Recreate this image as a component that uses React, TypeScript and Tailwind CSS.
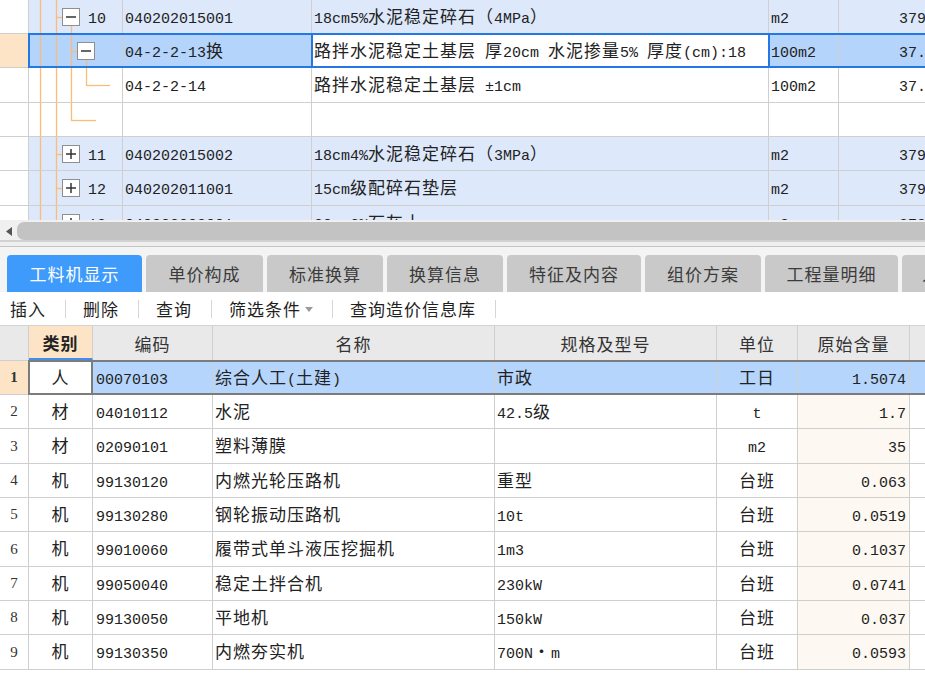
import React from "react"

const cjk = /([\u2E80-\u9FFF\uFF00-\uFFEF]+)/

// mixed text: CJK runs in a CJK face, the rest in a mono face
function Txt({ s, bold }: { s: string; bold?: boolean }) {
  const parts = s.split(cjk).filter((p) => p !== "")
  return (
    <span className={["whitespace-pre", bold ? "font-bold" : ""].join(" ")}>
      {parts.map((p, i) =>
        cjk.test(p) ? (
          <span key={i} className="font-['Noto_Sans_CJK_SC',sans-serif] text-[17px] tracking-[1px] leading-none">
            {p}
          </span>
        ) : (
          <span key={i} className="font-['Liberation_Mono',monospace] text-[15px] leading-none">
            {p}
          </span>
        )
      )}
    </span>
  )
}

type TreeKind = "open" | "sel" | "leaf" | "empty" | "closed"

function TreeLines({ kind, h }: { kind: TreeKind; h: number }) {
  const c = "#f9bd78"
  const box = (x: number, plus: boolean) => (
    <g>
      <rect x={x + 0.5} y={8.5} width={17} height={17} fill="#fff" stroke="#8f8f8f" />
      <line x1={x + 4} y1={17} x2={x + 14} y2={17} stroke="#333" strokeWidth={1.5} />
      {plus && <line x1={x + 9} y1={12} x2={x + 9} y2={22} stroke="#333" strokeWidth={1.5} />}
    </g>
  )
  return (
    <svg width="93" height={h} className="absolute left-0 top-0">
      <line x1={11.5} y1={0} x2={11.5} y2={h} stroke={c} strokeWidth={1.3} />
      <line x1={27.5} y1={0} x2={27.5} y2={h} stroke={c} strokeWidth={1.3} />
      {kind === "open" && (
        <>
          <line x1={27} y1={17.5} x2={33} y2={17.5} stroke={c} strokeWidth={1.3} />
          <line x1={42.5} y1={26} x2={42.5} y2={h} stroke={c} strokeWidth={1.3} />
          {box(33, false)}
        </>
      )}
      {kind === "closed" && (
        <>
          <line x1={27} y1={17.5} x2={33} y2={17.5} stroke={c} strokeWidth={1.3} />
          {box(33, true)}
        </>
      )}
      {kind === "sel" && (
        <>
          <line x1={42.5} y1={0} x2={42.5} y2={h} stroke={c} strokeWidth={1.3} />
          <line x1={42} y1={17.5} x2={48} y2={17.5} stroke={c} strokeWidth={1.3} />
          <line x1={57.5} y1={26} x2={57.5} y2={h} stroke={c} strokeWidth={1.3} />
          {box(48, false)}
        </>
      )}
      {kind === "leaf" && (
        <>
          <line x1={42.5} y1={0} x2={42.5} y2={h} stroke={c} strokeWidth={1.3} />
          <line x1={57.5} y1={0} x2={57.5} y2={17} stroke={c} strokeWidth={1.3} />
          <line x1={57} y1={17.5} x2={81} y2={17.5} stroke={c} strokeWidth={1.3} />
        </>
      )}
      {kind === "empty" && (
        <>
          <line x1={42.5} y1={0} x2={42.5} y2={17} stroke={c} strokeWidth={1.3} />
          <line x1={42} y1={17.5} x2={67} y2={17.5} stroke={c} strokeWidth={1.3} />
        </>
      )}
    </svg>
  )
}

const topRows: {
  kind: TreeKind
  no: string
  code: string
  name: string
  unit: string
  qty: string
  tint: boolean
  sel?: boolean
}[] = [
  { kind: "open", no: "10", code: "040202015001", name: "18cm5%水泥稳定碎石（4MPa）", unit: "m2", qty: "3791.96", tint: true },
  { kind: "sel", no: "", code: "04-2-2-13换", name: "路拌水泥稳定土基层 厚20cm 水泥掺量5% 厚度(cm):18", unit: "100m2", qty: "37.92", tint: false, sel: true },
  { kind: "leaf", no: "", code: "04-2-2-14", name: "路拌水泥稳定土基层 ±1cm", unit: "100m2", qty: "37.92", tint: false },
  { kind: "empty", no: "", code: "", name: "", unit: "", qty: "", tint: false },
  { kind: "closed", no: "11", code: "040202015002", name: "18cm4%水泥稳定碎石（3MPa）", unit: "m2", qty: "3791.96", tint: true },
  { kind: "closed", no: "12", code: "040202011001", name: "15cm级配碎石垫层", unit: "m2", qty: "3791.96", tint: true },
  { kind: "closed", no: "13", code: "040202002001", name: "20cm6%石灰土", unit: "m2", qty: "3791.96", tint: true },
]

const tabs = [
  { t: "工料机显示", w: "w-[135px]" },
  { t: "单价构成", w: "w-[117px]" },
  { t: "标准换算", w: "w-[116px]" },
  { t: "换算信息", w: "w-[116px]" },
  { t: "特征及内容", w: "w-[134px]" },
  { t: "组价方案", w: "w-[116px]" },
  { t: "工程量明细", w: "w-[133px]" },
  { t: "人材机汇总", w: "w-[130px]" },
]

const tools = ["插入", "删除", "查询", "筛选条件", "查询造价信息库"]

const items = [
  ["人", "00070103", "综合人工(土建)", "市政", "工日", "1.5074"],
  ["材", "04010112", "水泥", "42.5级", "t", "1.7"],
  ["材", "02090101", "塑料薄膜", "", "m2", "35"],
  ["机", "99130120", "内燃光轮压路机", "重型", "台班", "0.063"],
  ["机", "99130280", "钢轮振动压路机", "10t", "台班", "0.0519"],
  ["机", "99010060", "履带式单斗液压挖掘机", "1m3", "台班", "0.1037"],
  ["机", "99050040", "稳定土拌合机", "230kW", "台班", "0.0741"],
  ["机", "99130050", "平地机", "150kW", "台班", "0.037"],
  ["机", "99130350", "内燃夯实机", "700N・m", "台班", "0.0593"],
]

const cell = "shrink-0 h-full flex items-center border-r border-[#cfcfcf] overflow-hidden"

export default function App() {
  return (
    <div className="w-[925px] h-[696px] overflow-hidden bg-white text-[#222]">
      {/* upper grid */}
      <div className="h-[220px] overflow-hidden">
        {topRows.map((r, i) => {
          const tall = i % 3 === 2
          const bg = r.sel ? "bg-[#b4d4fb]" : r.tint ? "bg-[#dde8fb]" : "bg-white"
          return (
            <div key={i} className={["relative flex border-b border-[#cfcfcf]", tall ? "h-[35px]" : "h-[34px]"].join(" ")}>
              <div className={[cell, "w-[29px]", r.sel ? "bg-[#fde4c6]" : "bg-white"].join(" ")} />
              <div className={[cell, "relative w-[94px]", bg].join(" ")}>
                <TreeLines kind={r.kind} h={tall ? 35 : 34} />
                <span className="relative pl-[59px]">
                  <Txt s={r.no} />
                </span>
              </div>
              <div className={[cell, "w-[189px] pl-[2px]", bg].join(" ")}>
                <Txt s={r.code} />
              </div>
              <div className={[cell, "w-[457px] pl-[2px]", r.sel ? "bg-white" : bg].join(" ")}>
                <Txt s={r.name} />
              </div>
              <div className={[cell, "w-[70px] pl-[2px]", bg].join(" ")}>
                <Txt s={r.unit} />
              </div>
              <div className={[cell, "w-[120px] pl-[60px]", bg].join(" ")}>
                <Txt s={r.qty} />
              </div>
              {r.sel && (
                <>
                  <div className="absolute left-[28px] right-[-4px] top-[-1px] bottom-[-1px] border-2 border-[#2478e6] pointer-events-none" />
                  <div className="absolute left-[311px] w-[459px] top-[-1px] bottom-[-1px] border-x-2 border-[#2478e6] pointer-events-none" />
                </>
              )}
            </div>
          )
        })}
      </div>

      {/* horizontal scrollbar */}
      <div className="h-[20px] bg-[#f0f0f0] flex items-end">
        <div className="w-[17px] h-[18px] flex items-center justify-center">
          <svg width="6" height="9">
            <path d="M6 0 L0 4.5 L6 9 Z" fill="#555" />
          </svg>
        </div>
        <div className="flex-1 h-[18px] rounded-l-[7px] bg-[#c3c3c3]" />
      </div>

      {/* tab strip */}
      <div className="bg-[#f4f4f4]">
        <div className="h-[2px] bg-[#d2d2d2]" />
        <div className="h-[4px] bg-[#efefef]" />
        <div className="h-[1px] bg-[#c4c4c4]" />
        <div className="h-[8px]" />
        <div className="flex gap-[4px] pl-[7px] h-[37px] overflow-hidden">
          {tabs.map((t, i) => (
            <div
              key={t.t}
              className={[
                t.w,
                "shrink-0 rounded-t-[4px] flex items-center justify-center",
                i === 0 ? "bg-[#3f9bfb] text-white" : "bg-[#c9c9c9] text-[#3b3b3b]",
              ].join(" ")}>
              <span className="font-['Noto_Sans_CJK_SC',sans-serif] text-[17px] tracking-[1px] leading-none">{t.t}</span>
            </div>
          ))}
        </div>
      </div>

      {/* toolbar */}
      <div className="h-[34px] bg-white border-b border-[#d3d3d3] flex items-center pl-[10px]">
        {tools.map((t) => (
          <div key={t} className="flex items-center">
            <span className="font-['Noto_Sans_CJK_SC',sans-serif] text-[17px] tracking-[1px] leading-none text-[#1f1f1f]">{t}</span>
            {t === "筛选条件" && (
              <svg width="8" height="5" className="ml-[4px] mt-[2px]">
                <path d="M0 0 L8 0 L4 5 Z" fill="#9a9a9a" />
              </svg>
            )}
            <div className="ml-[19px] mr-[17px] w-px h-[18px] bg-[#d6d6d6]" />
          </div>
        ))}
      </div>

      {/* lower grid header */}
      <div className="flex h-[35px] bg-[#e9e9e9] border-b border-[#cfcfcf]">
        <div className={[cell, "w-[29px]"].join(" ")} />
        <div className={[cell, "w-[64px] justify-center bg-[#fde4c6] border-b-2 border-b-[#3f8ff0]"].join(" ")}>
          <span className="font-['Noto_Sans_CJK_SC',sans-serif] text-[17px] tracking-[1px] leading-none font-bold">类别</span>
        </div>
        {[
          ["编码", "w-[120px]"],
          ["名称", "w-[282px]"],
          ["规格及型号", "w-[222px]"],
          ["单位", "w-[81px]"],
          ["原始含量", "w-[112px]"],
        ].map(([t, w]) => (
          <div key={t} className={[cell, w, "justify-center text-[#333]"].join(" ")}>
            <span className="font-['Noto_Sans_CJK_SC',sans-serif] text-[17px] tracking-[1px] leading-none">{t}</span>
          </div>
        ))}
        <div className={[cell, "flex-1 border-r-0"].join(" ")} />
      </div>

      {/* lower grid rows */}
      {items.map((r, i) => {
        const sel = i === 0
        const fill = sel ? "bg-[#b5d5fc]" : "bg-white"
        return (
          <div
            key={i}
            className={["relative flex border-b border-[#cfcfcf]", i % 3 === 2 ? "h-[35px]" : "h-[34px]"].join(" ")}>
            <div className={[cell, "w-[29px] justify-center", sel ? "bg-[#fde4c6]" : "bg-white"].join(" ")}>
              <span
                className={[
                  "font-['Liberation_Serif',serif] text-[15px] leading-none text-[#333]",
                  sel ? "font-bold" : "",
                ].join(" ")}>
                {i + 1}
              </span>
            </div>
            <div className={[cell, "w-[64px] justify-center bg-white"].join(" ")}>
              <Txt s={r[0]} />
            </div>
            <div className={[cell, "w-[120px] pl-[3px]", fill].join(" ")}>
              <Txt s={r[1]} />
            </div>
            <div className={[cell, "w-[282px] pl-[2px]", fill].join(" ")}>
              <Txt s={r[2]} />
            </div>
            <div className={[cell, "w-[222px] pl-[2px]", fill].join(" ")}>
              <Txt s={r[3]} />
            </div>
            <div className={[cell, "w-[81px] justify-center", fill].join(" ")}>
              <Txt s={r[4]} />
            </div>
            <div className={[cell, "w-[112px] justify-end pr-[3px]", sel ? fill : "bg-[#fdf8f2]"].join(" ")}>
              <Txt s={r[5]} />
            </div>
            <div className={[cell, "flex-1 border-r-0", fill].join(" ")} />
            {sel && (
              <>
                <div className="absolute left-[28px] right-0 top-[-1px] bottom-[-1px] border-y-2 border-[#7c7c7c] pointer-events-none" />
                <div className="absolute left-[28px] w-[65px] top-[-1px] bottom-[-1px] border-2 border-[#7c7c7c] pointer-events-none" />
              </>
            )}
          </div>
        )
      })}
    </div>
  )
}
